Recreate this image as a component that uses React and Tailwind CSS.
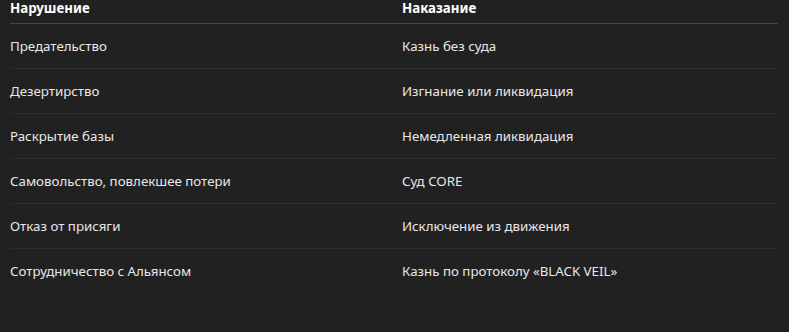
const rows = [
  ['Предательство', 'Казнь без суда'],
  ['Дезертирство', 'Изгнание или ликвидация'],
  ['Раскрытие базы', 'Немедленная ликвидация'],
  ['Самовольство, повлекшее потери', 'Суд CORE'],
  ['Отказ от присяги', 'Исключение из движения'],
  ['Сотрудничество с Альянсом', 'Казнь по протоколу «BLACK VEIL»'],
];

export default function App() {
  return (
    <div className="min-h-[332px] w-full bg-[#212121] px-[10px] font-['Noto_Sans',sans-serif] text-[13.3px] text-[#e8e8e8]">
      <div className="w-[768px]">
        <div className="grid h-[24px] grid-cols-[392px_1fr] items-start border-b border-[#454545] leading-[16px] font-bold text-white">
          <div>Нарушение</div>
          <div>Наказание</div>
        </div>
        {rows.map(([a, b], i) => (
          <div
            key={i}
            className={
              i < rows.length - 1
                ? 'grid h-[45px] grid-cols-[392px_1fr] items-center border-b border-[#2e2e2e] pt-[1px]'
                : 'grid h-[45px] grid-cols-[392px_1fr] items-center pt-[1px]'
            }
          >
            <div>{a}</div>
            <div>{b}</div>
          </div>
        ))}
      </div>
    </div>
  );
}
